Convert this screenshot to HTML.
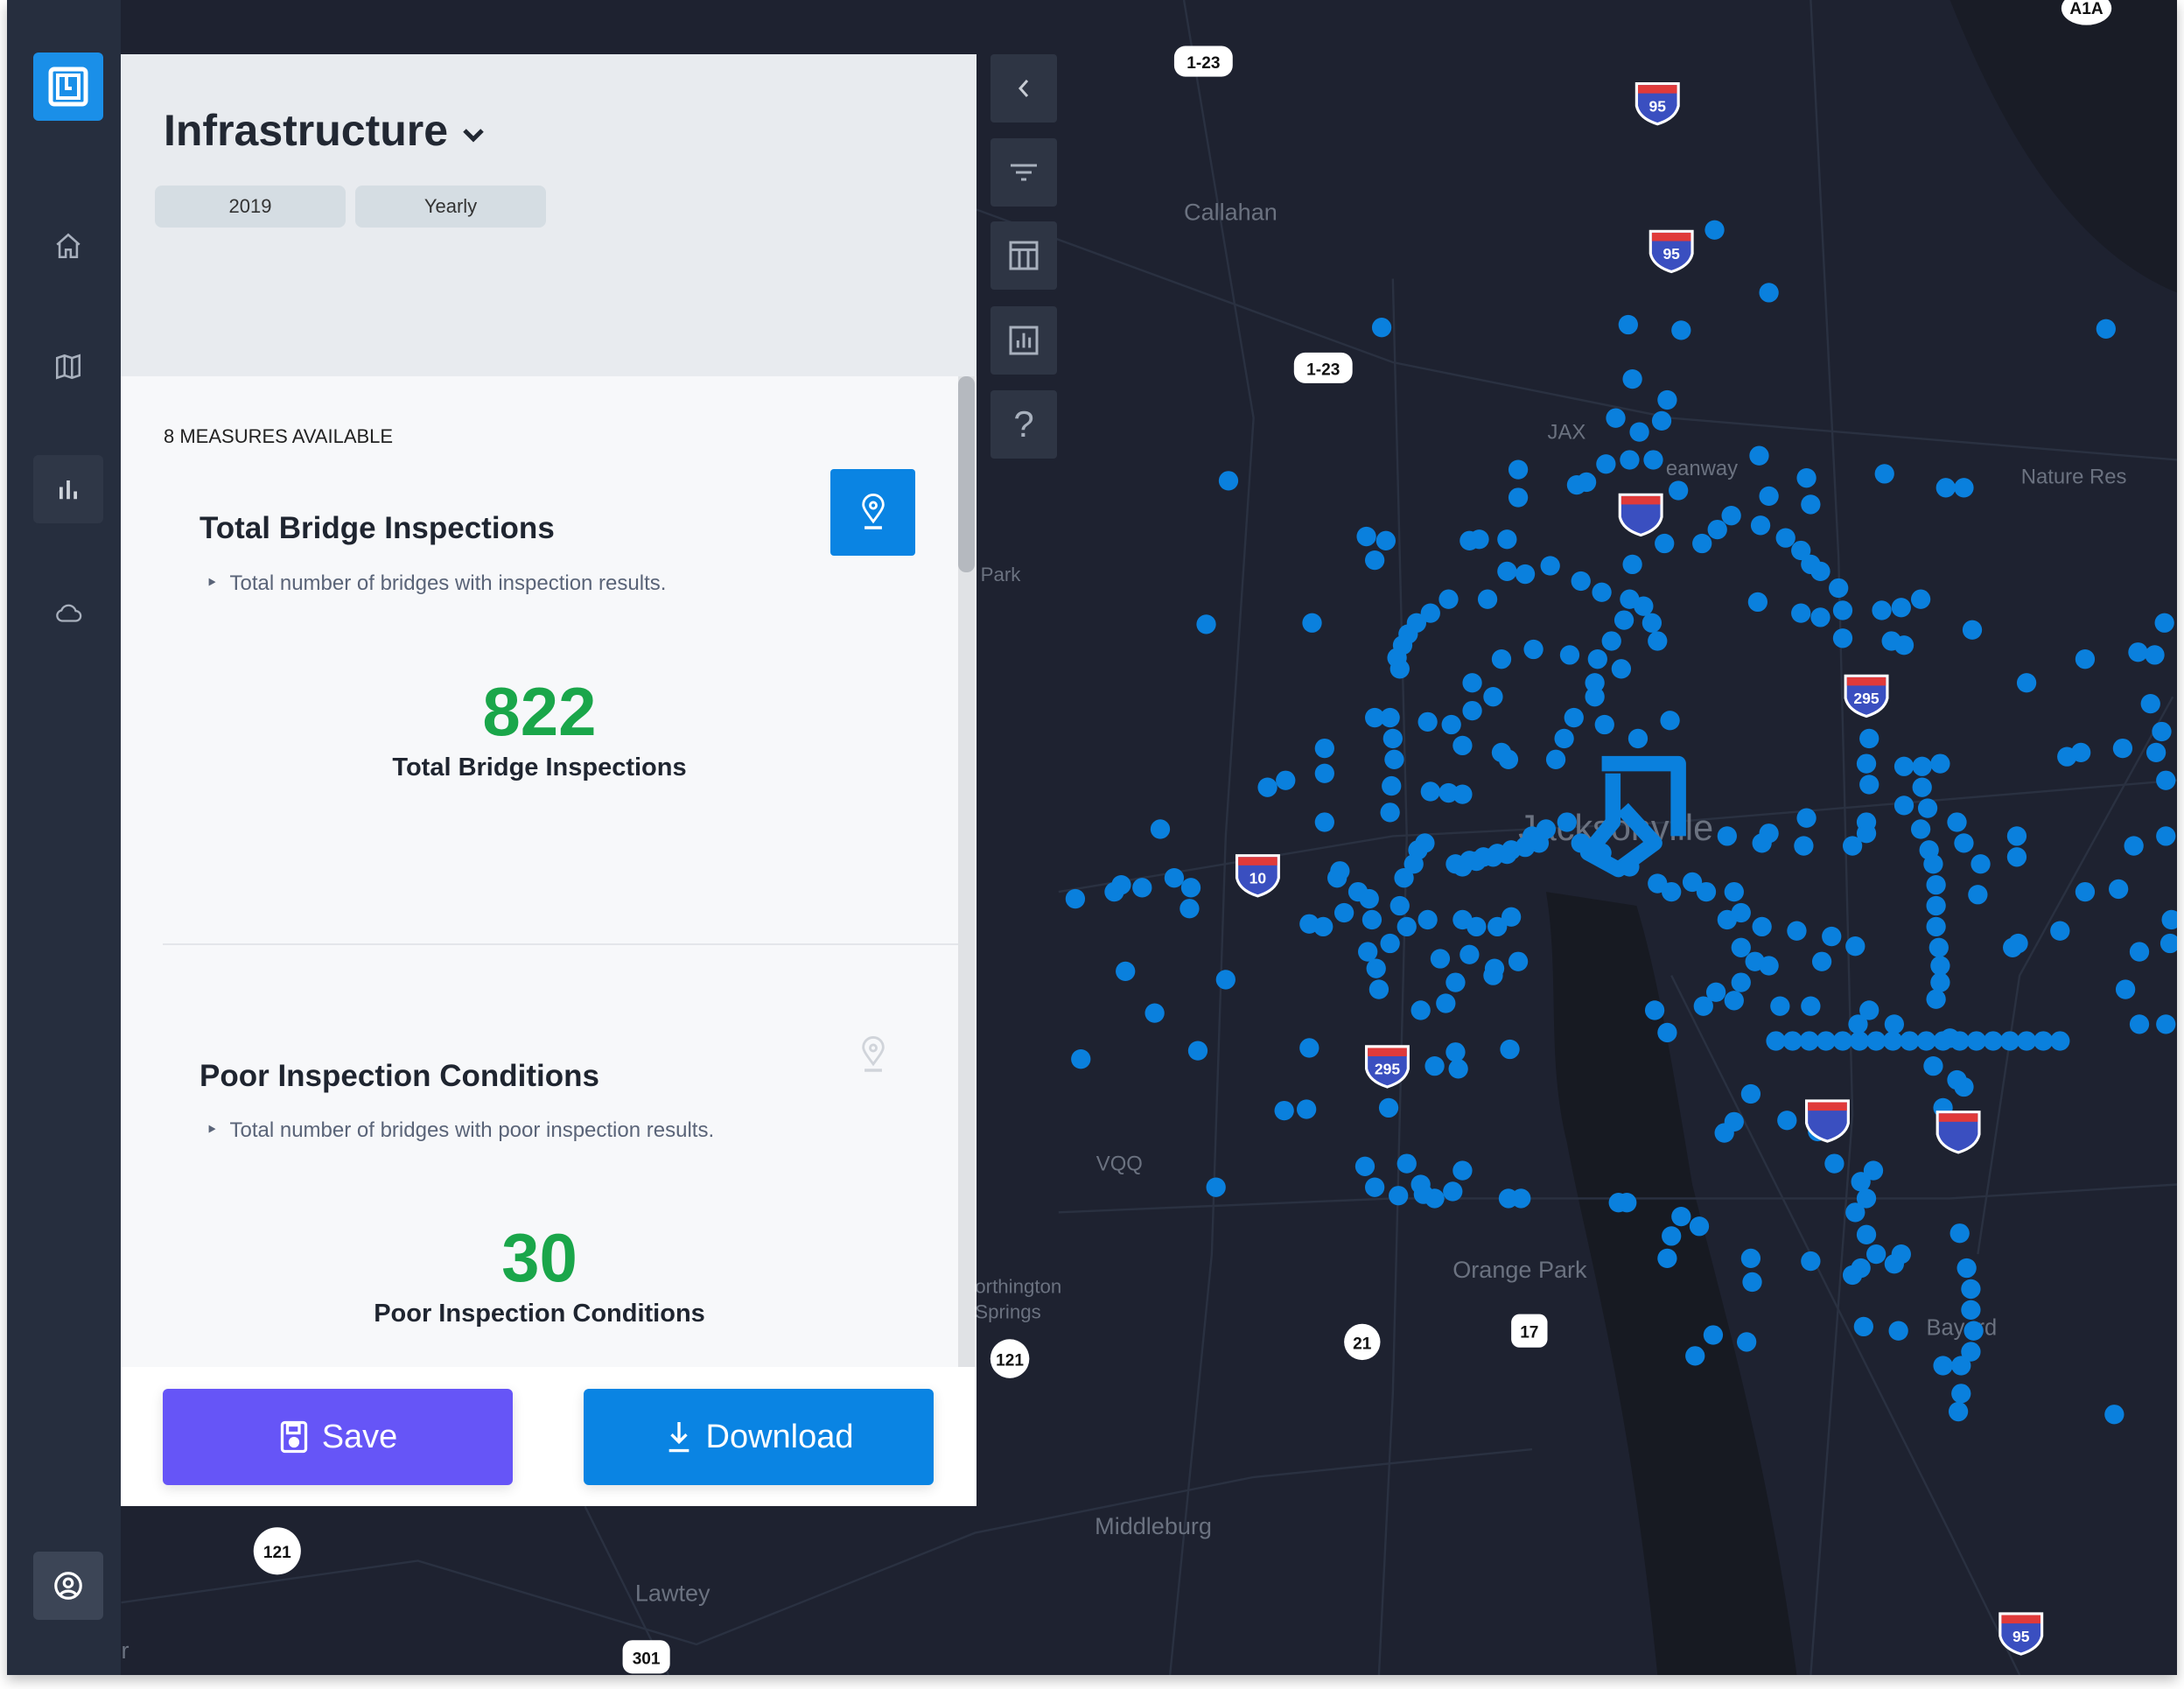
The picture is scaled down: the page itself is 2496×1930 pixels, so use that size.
<!DOCTYPE html>
<html><head><meta charset="utf-8"><style>
*{margin:0;padding:0;box-sizing:border-box}
body{width:2496px;height:1930px;background:#fff;position:relative;overflow:hidden;font-family:"Liberation Sans",sans-serif}
#map{position:absolute;left:8px;top:0;width:2480px;height:1914px;background:#1e2230;box-shadow:0 6px 14px rgba(0,0,0,.25)}
svg.m{position:absolute;left:0;top:0}
#side{position:absolute;left:8px;top:0;width:130px;height:1914px;background:#262e3e}
.sb{position:absolute;left:30px;width:80px;height:78px;border-radius:6px;display:flex;align-items:center;justify-content:center}
#panel{position:absolute;left:138px;top:62px;width:978px;height:1659px;background:#f7f8fa}
#head{position:absolute;left:0;top:0;width:978px;height:368px;background:#e8ebef}
.chip{position:absolute;top:150px;height:48px;width:218px;background:#d5dde3;border-radius:8px;font-size:22px;color:#333;display:flex;align-items:center;justify-content:center}
.tb{position:absolute;left:1132px;width:76px;height:78px;background:#2e3544;border-radius:4px;display:flex;align-items:center;justify-content:center}
.btn{position:absolute;top:1587px;height:110px;width:400px;border-radius:6px;color:#fff;font-size:38px;display:flex;align-items:center;justify-content:center;gap:14px;box-shadow:0 4px 14px rgba(0,0,0,.12)}
.t{position:absolute;white-space:nowrap}
</style></head><body>
<div id="map">
<svg class="m" width="2480" height="1914" viewBox="5 0 1558 1202" preserveAspectRatio="none">
<path d="M1110 640 C1120 700 1110 760 1125 820 C1140 900 1170 1000 1190 1202 L1290 1202 C1270 1050 1240 950 1215 850 C1200 760 1190 700 1175 650 Z" fill="#171a22"/>
<path d="M1400 0 C1440 100 1490 180 1563 210 L1563 0Z" fill="#191c26"/>
<g stroke="#2a3141" stroke-width="1.5" fill="none">
<path d="M850 0 L900 300 L880 600 L870 900 L840 1202"/><path d="M700 150 L1000 260 L1200 300 L1563 330"/>
<path d="M760 640 L1000 600 L1200 590 L1563 560"/><path d="M1000 200 L1010 600 L1000 1000 L990 1202"/>
<path d="M760 870 L1000 860 L1400 860 L1563 850"/><path d="M1300 0 L1320 400 L1330 800 L1300 1202"/>
<path d="M87 1150 L300 1120 L500 1180 L700 1100 L900 1060 L1100 1040"/><path d="M420 1081 L480 1202"/>
<path d="M1200 700 L1300 900 L1400 1100 L1450 1202"/><path d="M1560 500 L1450 700 L1420 900"/>
</g>
<g fill="#6b7280" font-family="Liberation Sans" font-size="17">
<text x="850" y="158">Callahan</text><text x="1111" y="315" font-size="15">JAX</text><text x="1196" y="341" font-size="15">eanway</text>
<text x="1451" y="347" font-size="15">Nature Res</text><text x="704" y="417" font-size="14">Park</text>
<text x="1090" y="603" font-size="26">Jacksonville</text><text x="1043" y="917">Orange Park</text>
<text x="786" y="1101">Middleburg</text><text x="456" y="1149">Lawtey</text><text x="787" y="840" font-size="15">VQQ</text>
<text x="1383" y="958" font-size="16">Bayard</text><text x="700" y="928" font-size="14">orthington</text><text x="700" y="946" font-size="14">Springs</text>
<text x="87" y="1190" font-size="17">r</text>
</g>
<g fill="#0a80dd">
<path d="M1150 548 L1205 548 L1205 600 M1158 555 L1158 590 L1140 612 L1162 624 L1188 605 L1165 580" stroke="#0a80dd" stroke-width="11" fill="none" stroke-linejoin="round"/>
</g>
<g fill="#0a80dd" id="dots"></g>
<g font-family="Liberation Sans" font-size="12" font-weight="bold" text-anchor="middle">
<g fill="#fff"><rect x="843" y="33" width="42" height="22" rx="8"/><rect x="929" y="253" width="42" height="22" rx="8"/>
<circle cx="725" cy="975" r="14"/><circle cx="978" cy="963" r="13"/><rect x="1085" y="943" width="26" height="24" rx="6"/><circle cx="199" cy="1113" r="17"/><rect x="447" y="1177" width="34" height="24" rx="7"/><ellipse cx="1498" cy="6" rx="18" ry="12"/></g>
<g fill="#111"><text x="864" y="49">1-23</text><text x="950" y="269">1-23</text><text x="725" y="980">121</text><text x="978" y="968">21</text><text x="1098" y="960">17</text><text x="199" y="1118">121</text><text x="464" y="1194">301</text><text x="1498" y="10">A1A</text></g>
</g>
<g id="sh"></g>
</svg>
</div>
<div id="side">
<div class="sb" style="top:60px;background:#1a8fe8"><svg width="52" height="52" viewBox="0 0 52 52"><rect x="6" y="6" width="40" height="40" rx="4" fill="none" stroke="#fff" stroke-width="5"/><rect x="14" y="13" width="24" height="26" fill="none" stroke="#fff" stroke-width="4"/><path d="M24 14 V28 H30" stroke="#fff" stroke-width="4" fill="none"/></svg></div>
<div class="sb" style="top:242px"><svg width="34" height="34" viewBox="0 0 24 24" fill="none" stroke="#a8b0bd" stroke-width="1.8"><path d="M3 11 L12 3 L21 11 M5 9 V21 H10 V15 H14 V21 H19 V9"/></svg></div>
<div class="sb" style="top:380px"><svg width="34" height="34" viewBox="0 0 24 24" fill="none" stroke="#a8b0bd" stroke-width="1.8"><path d="M3 5 L9 3 L15 5 L21 3 V19 L15 21 L9 19 L3 21 Z M9 3 V19 M15 5 V21"/></svg></div>
<div class="sb" style="top:520px;background:#2f3747"><svg width="30" height="30" viewBox="0 0 24 24" fill="#d0d5dc"><rect x="4" y="10" width="3" height="11"/><rect x="10.5" y="4" width="3" height="17"/><rect x="17" y="14" width="3" height="7"/></svg></div>
<div class="sb" style="top:662px"><svg width="38" height="34" viewBox="0 0 24 24" fill="none" stroke="#a8b0bd" stroke-width="1.6"><path d="M7 18 H18 A4 4 0 0 0 18 10 A6 6 0 0 0 6.5 9.5 A4.3 4.3 0 0 0 7 18 Z"/></svg></div>
<div class="sb" style="top:1773px;background:#3c4556"><svg width="38" height="38" viewBox="0 0 24 24" fill="none" stroke="#fff" stroke-width="2"><circle cx="12" cy="12" r="9"/><circle cx="12" cy="10" r="3"/><path d="M6.5 18.5 C8 15 16 15 17.5 18.5"/></svg></div>
</div>
<div id="panel">
<div id="head">
<div class="t" style="left:49px;top:58px;font-size:50px;font-weight:bold;color:#222833">Infrastructure <svg width="30" height="22" viewBox="0 0 30 22"><path d="M5 5 L15 15 L25 5" stroke="#222833" stroke-width="5" fill="none"/></svg></div>
<div class="chip" style="left:39px">2019</div><div class="chip" style="left:268px">Yearly</div>
</div>
<div style="position:absolute;left:957px;top:368px;width:19px;height:1194px;background:#e0e2e5"><div style="width:19px;height:224px;background:#b5b9bf;border-radius:9px"></div></div>
<div class="t" style="left:49px;top:424px;font-size:22px;color:#222">8 MEASURES AVAILABLE</div>
<div class="t" style="left:90px;top:522px;font-size:35px;font-weight:bold;color:#1f2530">Total Bridge Inspections</div>
<div style="position:absolute;left:811px;top:474px;width:97px;height:99px;background:#0a84e3;border-radius:4px;display:flex;align-items:center;justify-content:center"><svg width="34" height="44" viewBox="0 0 24 30" fill="none" stroke="#fff" stroke-width="2"><path d="M12 22 C6 14 4 11 4 8.5 A8 8 0 0 1 20 8.5 C20 11 18 14 12 22 Z"/><circle cx="12" cy="9" r="2.5"/><path d="M5 27 H19" stroke-width="2.5"/></svg></div>
<div class="t" style="left:97px;top:590px;font-size:24px;color:#5a6478">‣&nbsp;&nbsp;Total number of bridges with inspection results.</div>
<div class="t" style="left:0;width:957px;text-align:center;top:706px;font-size:78px;font-weight:bold;color:#1aa64a">822</div>
<div class="t" style="left:0;width:957px;text-align:center;top:799px;font-size:29px;font-weight:bold;color:#1f2530">Total Bridge Inspections</div>
<div style="position:absolute;left:48px;top:1016px;width:909px;height:2px;background:#e4e6ea"></div>
<div class="t" style="left:90px;top:1148px;font-size:35px;font-weight:bold;color:#1f2530">Poor Inspection Conditions</div>
<div style="position:absolute;left:811px;top:1094px;width:97px;height:99px;display:flex;align-items:center;justify-content:center"><svg width="34" height="44" viewBox="0 0 24 30" fill="none" stroke="#d0d4da" stroke-width="2"><path d="M12 22 C6 14 4 11 4 8.5 A8 8 0 0 1 20 8.5 C20 11 18 14 12 22 Z"/><circle cx="12" cy="9" r="2.5"/><path d="M5 27 H19" stroke-width="2.5"/></svg></div>
<div class="t" style="left:97px;top:1215px;font-size:24px;color:#5a6478">‣&nbsp;&nbsp;Total number of bridges with poor inspection results.</div>
<div class="t" style="left:0;width:957px;text-align:center;top:1330px;font-size:78px;font-weight:bold;color:#1aa64a">30</div>
<div class="t" style="left:0;width:957px;text-align:center;top:1423px;font-size:29px;font-weight:bold;color:#1f2530">Poor Inspection Conditions</div>
<div style="position:absolute;left:0;top:1500px;width:978px;height:159px;background:#fff"></div>
</div>
<div class="btn" style="left:186px;background:#6655f7"><svg width="36" height="40" viewBox="0 0 24 26" fill="none" stroke="#fff" stroke-width="2.2"><rect x="3" y="2" width="18" height="22" rx="2"/><rect x="7" y="4" width="9" height="6"/><circle cx="12" cy="17" r="3" fill="#fff"/></svg>Save</div>
<div class="btn" style="left:667px;background:#0a84e3"><svg width="34" height="40" viewBox="0 0 24 28" fill="none" stroke="#fff" stroke-width="2.4"><path d="M12 2 V18 M6 12 L12 18 L18 12 M4 25 H20"/></svg>Download</div>
<div class="tb" style="top:62px"><svg width="22" height="30" viewBox="0 0 22 30"><path d="M15 6 L7 15 L15 24" stroke="#c7ccd4" stroke-width="3" fill="none"/></svg></div>
<div class="tb" style="top:158px"><svg width="36" height="30" viewBox="0 0 36 30" stroke="#a8b0bd" stroke-width="3"><path d="M3 7 H33 M9 15 H27 M15 23 H21"/></svg></div>
<div class="tb" style="top:253px"><svg width="40" height="40" viewBox="0 0 24 24" fill="none" stroke="#a8b0bd" stroke-width="1.8"><rect x="3" y="3" width="18" height="18"/><path d="M3 8 H21 M9 8 V21 M15 8 V21"/></svg></div>
<div class="tb" style="top:350px"><svg width="40" height="40" viewBox="0 0 24 24" fill="none" stroke="#a8b0bd" stroke-width="1.8"><rect x="3" y="3" width="18" height="18"/><path d="M8 17 V12 M12 17 V7 M16 17 V10"/></svg></div>
<div class="tb" style="top:446px;font-size:42px;color:#a8b0bd">?</div>
<script>
var d=[[1231,165],[1270,210],[1169,233],[1207,237],[992,235],[1512,236],[1172,272],[1197,287],[1193,302],[1160,300],[1177,310],[1090,337],[1153,333],[1170,330],[1187,330],[1205,352],[1132,348],[1139,346],[1263,327],[1297,343],[1353,340],[1397,350],[1410,350],[1090,357],[882,345],[1270,356],[1300,362],[1243,370],[1233,380],[1222,390],[1264,377],[1282,386],[1293,395],[1300,405],[1307,410],[1320,422],[981,385],[995,388],[987,402],[1055,388],[1062,387],[1082,387],[1172,405],[1195,390],[1082,410],[1095,412],[1113,406],[1135,417],[1150,425],[1170,430],[1180,435],[1166,445],[1186,447],[1157,460],[1147,473],[1164,480],[1190,460],[1068,430],[1040,430],[1027,440],[1017,447],[1011,455],[1007,463],[1003,472],[1005,480],[866,448],[942,447],[1262,432],[1293,440],[1307,443],[1323,438],[1351,438],[1365,436],[1379,430],[1416,452],[1323,458],[1358,460],[1367,463],[1554,447],[1535,468],[1547,470],[1497,473],[1455,490],[1078,473],[1057,490],[1101,466],[1127,470],[1145,500],[1130,515],[1123,530],[1117,545],[1152,520],[1176,530],[1199,517],[1145,490],[987,515],[998,515],[1000,530],[1025,518],[1042,520],[1057,510],[1072,500],[1050,535],[1078,540],[1083,545],[1001,545],[951,537],[951,555],[1027,568],[1040,569],[1050,570],[999,564],[998,583],[1342,530],[1340,548],[1367,550],[1380,550],[1393,548],[1342,563],[1367,578],[1380,565],[1384,580],[1494,540],[1484,543],[1524,537],[1552,525],[1544,505],[1548,540],[910,565],[923,560],[833,595],[951,590],[1448,600],[1448,615],[1532,607],[1555,600],[1297,587],[1265,605],[1270,598],[1295,607],[1240,600],[1330,607],[1340,598],[1379,595],[1385,610],[1388,620],[1390,635],[1390,650],[1390,665],[1392,680],[1393,693],[1393,705],[1390,717],[1422,620],[1420,642],[1497,640],[1521,638],[1449,677],[1445,680],[1479,668],[1536,683],[1558,677],[1559,660],[1526,710],[1536,735],[1555,735],[772,645],[800,640],[805,635],[820,637],[843,630],[855,637],[854,652],[808,697],[829,727],[860,754],[776,760],[880,703],[940,663],[950,665],[965,655],[960,630],[962,625],[975,640],[983,645],[985,660],[982,683],[988,695],[998,677],[1010,665],[1005,650],[1008,630],[1015,620],[1018,610],[1023,605],[1050,622],[1060,618],[1072,615],[1082,613],[1095,608],[1100,600],[1110,595],[1125,590],[1135,605],[1150,612],[1170,622],[1190,634],[1200,640],[1215,633],[1225,640],[1245,640],[1250,655],[1240,660],[1250,680],[1260,690],[1265,665],[1290,668],[1315,672],[1332,679],[1308,690],[1270,693],[1250,705],[1232,712],[1223,722],[1245,718],[1188,725],[1197,741],[1278,722],[1300,722],[1342,725],[1360,735],[1334,735],[1050,660],[1060,665],[1075,665],[1085,658],[1025,660],[1034,688],[1055,685],[1073,695],[1090,690],[1045,705],[1072,700],[990,710],[1038,720],[1020,725],[1045,755],[1047,767],[1084,753],[1030,765],[940,752],[997,795],[922,797],[938,796],[1257,785],[1245,805],[1238,813],[1283,804],[1305,812],[1317,835],[1336,848],[1345,840],[1340,860],[1332,870],[1340,886],[1347,900],[1336,910],[1330,915],[1360,907],[1365,900],[1300,905],[1257,903],[1258,920],[1207,873],[1220,880],[1200,887],[1197,903],[1162,863],[1168,863],[1083,860],[1092,860],[1043,855],[1022,857],[1030,860],[1010,835],[1020,850],[980,837],[987,852],[1004,858],[873,852],[1050,840],[1407,885],[1412,910],[1415,925],[1415,940],[1417,955],[1415,970],[1408,980],[1408,1000],[1406,1013],[1395,980],[1363,955],[1338,952],[1254,963],[1230,958],[1217,973],[1518,1015],[1405,775],[1410,780],[1400,745],[1395,795],[1388,765],[1410,605],[1405,590],[1340,590],[1555,560]];
for(var x=1275;x<=1490;x+=12)d.push([x,747]);
for(var x=1045;x<=1110;x+=10)d.push([x,620-(x-1045)*0.25]);
var s='';d.forEach(function(p){s+='<circle cx="'+p[0]+'" cy="'+p[1]+'" r="7"/>'});document.getElementById('dots').innerHTML=s;
var sh=[[1190,73,'95'],[1200,179,'95'],[1178,368,''],[1340,498,'295'],[903,627,'10'],[996,764,'295'],[1312,803,''],[1406,811,''],[1451,1171,'95']];
var h='';sh.forEach(function(p){var x=p[0],y=p[1];h+='<path d="M'+(x-15)+' '+(y-13)+' L'+(x+15)+' '+(y-13)+' L'+(x+15)+' '+(y+3)+' Q'+(x+13)+' '+(y+12)+' '+x+' '+(y+16)+' Q'+(x-13)+' '+(y+12)+' '+(x-15)+' '+(y+3)+' Z" fill="#3a4fc0" stroke="#fff" stroke-width="2"/><rect x="'+(x-14)+'" y="'+(y-12)+'" width="28" height="6" fill="#e03a3a"/><text x="'+x+'" y="'+(y+7)+'" fill="#fff" font-size="11" font-weight="bold" text-anchor="middle" font-family="Liberation Sans">'+p[2]+'</text>'});document.getElementById('sh').innerHTML=h;
</script>
</body></html>
